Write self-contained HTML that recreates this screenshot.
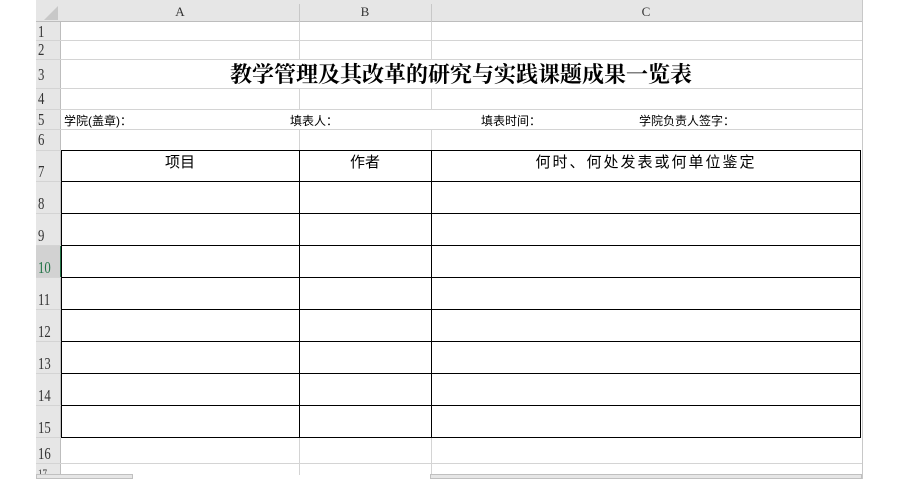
<!DOCTYPE html>
<html><head><meta charset="utf-8"><style>
*{margin:0;padding:0;box-sizing:border-box}
body{width:900px;height:479px;background:#fff;position:relative;overflow:hidden;font-family:"Liberation Sans","Noto Sans CJK SC",sans-serif}
.a{position:absolute}
.hl{position:absolute;height:1px;background:#d4d4d4}
.vl{position:absolute;width:1px;background:#d4d4d4}
.bh{position:absolute;height:1px;background:#000}
.bv{position:absolute;width:1px;background:#000}
.rn{position:absolute;left:38px;font-family:"Liberation Serif","Noto Serif CJK SC",serif;font-size:17px;color:#333;line-height:16px;transform:scaleX(0.75);transform-origin:left top}
.ch{position:absolute;top:0;height:22px;font-family:"Liberation Serif",serif;font-size:13px;color:#333;text-align:center;line-height:24px}
.t5{position:absolute;top:112px;font-size:12px;color:#000}
.hd{position:absolute;top:151px;font-size:15px;text-align:center;color:#000}
</style></head><body>
<div class="a" style="left:36px;top:0;width:827px;height:22px;background:#e6e6e6;border-bottom:1px solid #bdbdbd"></div>
<div class="a" style="left:36px;top:22px;width:25px;height:457px;background:#e6e6e6;border-right:1px solid #bdbdbd"></div>
<div class="a" style="left:36px;top:245px;width:25px;height:32px;background:#d2d2d2"></div>
<div class="a" style="left:60px;top:245px;width:2px;height:32px;background:#217346"></div>
<svg class="a" style="left:44px;top:6px" width="14" height="14"><polygon points="14,0 14,14 0,14" fill="#c8c8c8"/></svg>
<div class="ch" style="left:61px;width:238px">A</div>
<div class="ch" style="left:299px;width:132px">B</div>
<div class="ch" style="left:431px;width:430px">C</div>
<div class="vl" style="left:299px;top:4px;height:18px;background:#c8c8c8"></div>
<div class="vl" style="left:431px;top:4px;height:18px;background:#c8c8c8"></div>
<div class="vl" style="left:862px;top:0;height:479px;background:#c8c8c8"></div>
<div class="hl" style="left:36px;top:40px;width:826px"></div>
<div class="hl" style="left:36px;top:59px;width:826px"></div>
<div class="hl" style="left:36px;top:88px;width:826px"></div>
<div class="hl" style="left:36px;top:109px;width:826px"></div>
<div class="hl" style="left:36px;top:129px;width:826px"></div>
<div class="hl" style="left:36px;top:463px;width:826px"></div>
<div class="hl" style="left:36px;top:181px;width:25px"></div>
<div class="hl" style="left:36px;top:213px;width:25px"></div>
<div class="hl" style="left:36px;top:245px;width:25px"></div>
<div class="hl" style="left:36px;top:277px;width:25px"></div>
<div class="hl" style="left:36px;top:309px;width:25px"></div>
<div class="hl" style="left:36px;top:341px;width:25px"></div>
<div class="hl" style="left:36px;top:373px;width:25px"></div>
<div class="hl" style="left:36px;top:405px;width:25px"></div>
<div class="hl" style="left:36px;top:150px;width:25px"></div>
<div class="hl" style="left:36px;top:437px;width:25px"></div>
<div class="vl" style="left:299px;top:22px;height:37px"></div>
<div class="vl" style="left:431px;top:22px;height:37px"></div>
<div class="vl" style="left:299px;top:88px;height:21px"></div>
<div class="vl" style="left:431px;top:88px;height:21px"></div>
<div class="vl" style="left:299px;top:129px;height:21px"></div>
<div class="vl" style="left:431px;top:129px;height:21px"></div>
<div class="vl" style="left:299px;top:437px;height:38px"></div>
<div class="vl" style="left:431px;top:437px;height:38px"></div>
<div class="bh" style="left:61px;top:150px;width:800px"></div>
<div class="bh" style="left:61px;top:181px;width:800px"></div>
<div class="bh" style="left:61px;top:213px;width:800px"></div>
<div class="bh" style="left:61px;top:245px;width:800px"></div>
<div class="bh" style="left:61px;top:277px;width:800px"></div>
<div class="bh" style="left:61px;top:309px;width:800px"></div>
<div class="bh" style="left:61px;top:341px;width:800px"></div>
<div class="bh" style="left:61px;top:373px;width:800px"></div>
<div class="bh" style="left:61px;top:405px;width:800px"></div>
<div class="bh" style="left:61px;top:437px;width:800px"></div>
<div class="bv" style="left:61px;top:150px;height:288px"></div>
<div class="bv" style="left:299px;top:150px;height:288px"></div>
<div class="bv" style="left:431px;top:150px;height:288px"></div>
<div class="bv" style="left:860px;top:150px;height:288px"></div>
<div class="rn" style="top:24px">1</div>
<div class="rn" style="top:42px">2</div>
<div class="rn" style="top:67px">3</div>
<div class="rn" style="top:91px">4</div>
<div class="rn" style="top:112px">5</div>
<div class="rn" style="top:132px">6</div>
<div class="rn" style="top:164px">7</div>
<div class="rn" style="top:196px">8</div>
<div class="rn" style="top:228px">9</div>
<div class="rn" style="top:260px;color:#217346">10</div>
<div class="rn" style="top:292px">11</div>
<div class="rn" style="top:324px">12</div>
<div class="rn" style="top:356px">13</div>
<div class="rn" style="top:388px">14</div>
<div class="rn" style="top:420px">15</div>
<div class="rn" style="top:446px">16</div>
<div class="rn" style="top:465px;font-size:12px">17</div>
<div class="a" style="left:61px;width:800px;top:60px;text-align:center;font-family:'Noto Serif CJK SC',serif;font-weight:bold;font-size:22px;line-height:28px;color:#000">教学管理及其改革的研究与实践课题成果一览表</div>
<div class="t5" style="left:64px">学院(盖章)：</div>
<div class="t5" style="left:290px">填表人：</div>
<div class="t5" style="left:481px">填表时间：</div>
<div class="t5" style="left:639px">学院负责人签字：</div>
<div class="hd" style="left:61px;width:238px">项目</div>
<div class="hd" style="left:299px;width:132px">作者</div>
<div class="hd" style="left:431px;width:430px;letter-spacing:2px">何时、何处发表或何单位鉴定</div>
<div class="a" style="left:36px;top:474px;width:97px;height:5px;background:#e6e6e6;border:1px solid #c0c0c0"></div>
<div class="a" style="left:430px;top:474px;width:432px;height:5px;background:#e6e6e6;border:1px solid #c0c0c0"></div>
</body></html>
